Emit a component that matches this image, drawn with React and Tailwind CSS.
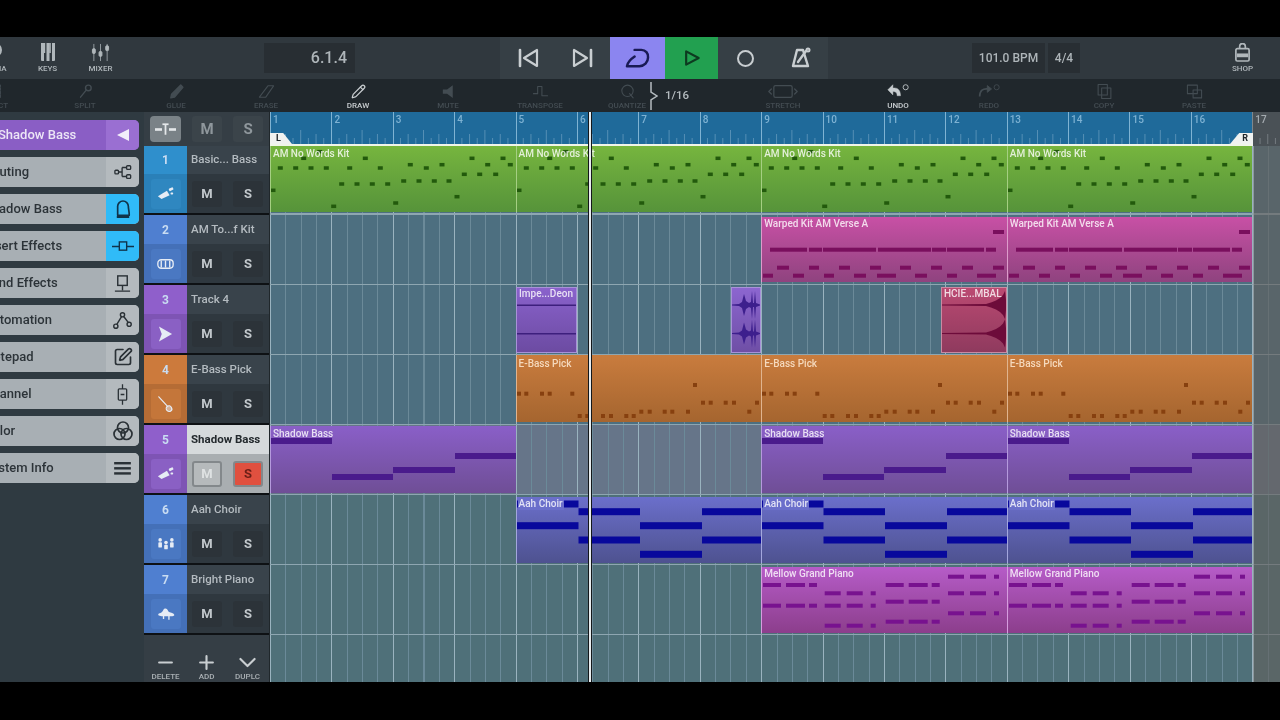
import { Pencil, SquarePen } from "lucide-react"

const BAR = 61.4

// grid lines shared by every arrangement row
const GRID =
  "bg-[repeating-linear-gradient(90deg,#9ab3bf_0,#9ab3bf_1px,transparent_1px,transparent_61.4px),repeating-linear-gradient(90deg,#6b8a99_0,#6b8a99_1px,transparent_1px,transparent_15.35px)]"

const GREEN_NOTES = [
  [32.7, 12.3], [48.7, 5.7], [94.3, 12.3], [201, 12.3], [232, 12.3], [9.3, 22], [24.7, 22], [40, 22], [55.3, 22], [78.7, 22],
  [109.3, 22], [139.3, 18.7], [155.3, 22], [171, 18.7], [216.7, 18.7], [239.3, 18.7], [70.7, 38], [86, 38], [101.3, 38],
  [116.7, 38], [132.7, 35], [148, 35], [163.3, 35], [178, 35], [193.3, 28.3], [208.7, 28.3], [224.7, 28.3], [2, 44.3],
  [62.7, 60.3], [124.7, 57], [186, 50.7],
]

const PINK_NOTES = [
  [15, 231, 242], [32.7, 8, 45], [32.7, 47, 60], [32.7, 61, 114], [32.7, 116, 169], [32.7, 170, 184], [32.7, 185, 222], [32.7, 224, 234],
  [50.7, 15, 27], [50.7, 47, 57], [50.7, 77, 88], [50.7, 108, 119], [50.7, 138, 149], [50.7, 169, 180], [50.7, 200, 211], [50.7, 231, 242],
  [58.7, 1, 11], [58.7, 31, 42], [58.7, 62, 72], [58.7, 92, 104], [58.7, 115, 134], [58.7, 153, 165], [58.7, 185, 195], [58.7, 215, 234],
]

const ORANGE_NOTES = [
  [178, 30], [2, 38.7], [9.3, 38.7], [25, 38.7], [32.7, 38.7], [55.3, 38.7], [186, 47.7], [193.7, 47.7], [208.7, 47.7], [217, 47.7],
  [240, 47.7], [124.3, 56.7], [132.7, 56.7], [147.7, 56.7], [155.3, 56.7], [171, 56.7], [232.3, 56.7], [62.7, 61], [70.3, 61],
  [86, 61], [94, 61], [109.3, 61], [116.7, 61],
]

const BASS_NOTES = [[15, 0, 61], [51, 61, 122], [44, 122, 184], [30, 184, 245]]

const CHOIR_NOTES = [
  [7, 0, 61.5], [14.7, 61.5, 123], [14.7, 185, 245], [28.7, 0, 61.5], [28.7, 123, 185], [43, 61.5, 123], [43, 185, 245], [57.3, 123, 185],
]

const chord = (y, x) => [[y, x, x + 18], [y, x + 23, x + 42], [y, x + 46, x + 54]]
const chordShort = (y, x) => [[y, x, x + 16], [y, x + 22, x + 38], [y, x + 46, x + 51]]
const PIANO_NOTES = [
  ...chord(18, 1), ...chord(38.7, 1), ...chordShort(26.3, 62.7), ...chordShort(38.7, 62.7), ...chordShort(58.7, 62.7),
  ...chord(18, 123.7), ...chord(34.7, 123.7), ...chord(54.7, 123.7), ...chordShort(9.7, 186), ...chordShort(26.3, 186), ...chordShort(46.3, 186),
]

function Dots({ notes, w, h, color }) {
  return (
    <svg className="absolute inset-0 w-full h-full">
      {notes.map(([x, y], i) => (
        <rect key={i} x={x - w / 2} y={y - h / 2} width={w} height={h} fill={color} />
      ))}
    </svg>
  )
}

function Bars({ notes, h, color }) {
  return (
    <svg className="absolute inset-0 w-full h-full">
      {notes.map(([y, a, b], i) => (
        <rect key={i} x={a} y={y - h / 2} width={b - a} height={h} fill={color} />
      ))}
    </svg>
  )
}

function Clip({ bar, bars, left, width, title, className, textClass = "text-white/80", titleClass = "", children }) {
  const x = left ?? (bar - 1) * BAR
  const w = width ?? bars * BAR
  return (
    <div className={`absolute overflow-hidden ${className}`} style={{ left: x, width: w }}>
      {children}
      {title && (
        <span className={`absolute left-[1px] top-[2px] px-[1px] text-[10px] leading-[12px] font-medium whitespace-nowrap ${textClass} ${titleClass}`}>
          {title}
        </span>
      )}
    </div>
  )
}

function Row({ className = "", children }) {
  return <div className={`relative shrink-0 ${GRID} ${className}`}>{children}</div>
}

// mirror an outline around the wave's centre line
const mirrored = (outline, cy) => {
  const up = outline.map(([x, d]) => `${x} ${cy - d}`)
  const down = [...outline].reverse().map(([x, d]) => `${x} ${cy + d}`)
  return `M${[...up, ...down].join(" L")} Z`
}

// drum hit in the short purple audio clip
const BURST = [[0, 0.5], [7, 1], [10, 3], [12, 11], [14, 4], [17, 2], [19, 3], [20, 14], [21, 2], [22, 2], [23, 14], [24, 2], [28, 0.5]]

// reversed cymbal, flat until it swells at the clip end
const SWELL = [[0, 0.6], [44, 1], [49, 2.5], [54, 4.5], [58, 7], [61, 10], [63, 14], [64, 5]]

function Arrangement() {
  const green = "top-0 h-[66px] bg-gradient-to-b from-[#76b53e] to-[#56933a] border-l border-[#a5cf82]"
  const pink = "top-[2px] h-[65px] bg-gradient-to-b from-[#c850a5] to-[#8f437f] border-l border-[#dd9ccb]"
  const orange = "top-0 h-[67px] bg-gradient-to-b from-[#c97c3e] to-[#a5652f] border-l border-[#e0b48f]"
  const purple = "top-[1px] h-[67px] bg-gradient-to-b from-[#8a5fc8] to-[#6f4e96] border-l border-[#b59add]"
  const blue = "top-[2px] h-[66px] bg-gradient-to-b from-[#6b6fcb] to-[#4e5290] border-l border-[#a3a6dd]"
  const magenta = "top-[2px] h-[66px] bg-gradient-to-b from-[#b65cc8] to-[#8c3e8c] border-l border-[#d69ddf]"
  const audioBorder = "border border-[#a892d8]"

  const greenBody = <Dots notes={GREEN_NOTES} w={5} h={3.5} color="#225a0c" />
  const pinkBody = <Bars notes={PINK_NOTES} h={4} color="#7a0f5e" />
  const orangeBody = <Dots notes={ORANGE_NOTES} w={4} h={4} color="#87400f" />
  const bassBody = <Bars notes={BASS_NOTES} h={6} color="#4a1b8c" />
  const choirBody = <Bars notes={CHOIR_NOTES} h={7} color="#08089c" />
  const pianoBody = <Bars notes={PIANO_NOTES} h={4} color="#78128f" />

  return (
    <div className="relative flex-1 overflow-hidden">
      <Ruler />

      <Row className="h-[69px] bg-[#4d6f80] border-b-[2px] border-[#8ea6b1]">
        <Clip bar={1} bars={4} title="AM No Words Kit" className={green}>{greenBody}</Clip>
        <Clip bar={5} bars={4} title="AM No Words Kit" className={green}>{greenBody}</Clip>
        <Clip bar={9} bars={4} title="AM No Words Kit" className={green}>{greenBody}</Clip>
        <Clip bar={13} bars={4} title="AM No Words Kit" className={green}>{greenBody}</Clip>
      </Row>

      <Row className="h-[70px] bg-[#4d6f80] border-b border-[#8ea6b1]">
        <Clip bar={9} bars={4} title="Warped Kit AM Verse A" titleClass="-mt-[1px]" className={pink}>{pinkBody}</Clip>
        <Clip bar={13} bars={4} title="Warped Kit AM Verse A" titleClass="-mt-[1px]" className={pink}>{pinkBody}</Clip>
      </Row>

      <Row className="h-[70px] bg-[#4d6f80] border-b border-[#8ea6b1]">
        <Clip left={246} width={61} title="Impe...Deon" titleClass="-mt-[2px]" className={`top-[2px] h-[66px] bg-gradient-to-b from-[#8a62cc] to-[#6c4ba2] ${audioBorder}`}>
          <svg className="absolute inset-0 w-full h-full">
            <rect x="0" y="16.5" width="60" height="1.5" fill="#3d1f7d" />
            <rect x="0" y="45" width="60" height="1.5" fill="#3d1f7d" />
          </svg>
        </Clip>
        <Clip left={461} width={30} className={`top-[2px] h-[66px] bg-gradient-to-b from-[#8c66d0] to-[#6f4fa6] ${audioBorder}`}>
          <svg className="absolute inset-0 w-full h-full">
            <path d={mirrored(BURST, 17)} fill="#3d1f8d" />
            <path d={mirrored(BURST, 45.5)} fill="#3d1f8d" />
          </svg>
        </Clip>
        <Clip left={671} width={66} title="HCIE...MBAL" titleClass="-mt-[2px]" className="top-[2px] h-[66px] bg-gradient-to-b from-[#bb4a72] to-[#8f3a5e] border border-[#c98ba2]">
          <svg className="absolute inset-0 w-full h-full">
            <path d={mirrored(SWELL, 17)} fill="#6d0b3a" />
            <path d={mirrored(SWELL, 45.5)} fill="#6d0b3a" />
          </svg>
        </Clip>
      </Row>

      <Row className="h-[70px] bg-[#4d6f80] border-b border-[#8ea6b1]">
        <Clip bar={5} bars={4} title="E-Bass Pick" textClass="text-[#f5d9bd]" titleClass="mt-[1px]" className={orange}>{orangeBody}</Clip>
        <Clip bar={9} bars={4} title="E-Bass Pick" textClass="text-[#f5d9bd]" titleClass="mt-[1px]" className={orange}>{orangeBody}</Clip>
        <Clip bar={13} bars={4} title="E-Bass Pick" textClass="text-[#f5d9bd]" titleClass="mt-[1px]" className={orange}>{orangeBody}</Clip>
      </Row>

      <Row className="h-[70px] bg-[#667589] border-b border-[#8ea6b1]">
        <Clip bar={1} bars={4} title="Shadow Bass" className={purple}>{bassBody}</Clip>
        <Clip bar={9} bars={4} title="Shadow Bass" className={purple}>{bassBody}</Clip>
        <Clip bar={13} bars={4} title="Shadow Bass" className={purple}>{bassBody}</Clip>
      </Row>

      <Row className="h-[70px] bg-[#4f7079] border-b border-[#8ea6b1]">
        <Clip bar={5} bars={4} title="Aah Choir" titleClass="-mt-[1px] bg-[#6b6fcb]" className={blue}>{choirBody}</Clip>
        <Clip bar={9} bars={4} title="Aah Choir" titleClass="-mt-[1px] bg-[#6b6fcb]" className={blue}>{choirBody}</Clip>
        <Clip bar={13} bars={4} title="Aah Choir" titleClass="-mt-[1px] bg-[#6b6fcb]" className={blue}>{choirBody}</Clip>
      </Row>

      <Row className="h-[70px] bg-[#4f7079] border-b border-[#8ea6b1]">
        <Clip bar={9} bars={4} title="Mellow Grand Piano" titleClass="-mt-[1px]" className={magenta}>{pianoBody}</Clip>
        <Clip bar={13} bars={4} title="Mellow Grand Piano" titleClass="-mt-[1px]" className={magenta}>{pianoBody}</Clip>
      </Row>

      <Row className="h-[47px] bg-[#4f7079]" />

      {/* area past the song end */}
      <div className="absolute top-[34px] bottom-0 right-0 w-[27px] bg-[#625f5c]/60 border-l border-[#8d979d]" />

      {/* playhead */}
      <div className="absolute top-0 bottom-0 left-[318px] w-[4px] bg-[#14181b] flex justify-center">
        <div className="w-[2px] h-full bg-[#e8ecee]" />
      </div>
    </div>
  )
}

function Ruler() {
  const ticks = []
  for (let b = 0; b < 17; b++) {
    for (let j = 2; j < 16; j += 2) {
      const h = j % 8 === 0 ? 14 : j % 4 === 0 ? 10 : 6
      const x = b * BAR + (j * BAR) / 16
      ticks.push(<line key={`${b}-${j}`} x1={x} x2={x} y1={32 - h} y2={32} stroke={b === 16 ? "#747b80" : "#558fb5"} strokeWidth="1" />)
    }
  }
  return (
    <div className="relative h-[34px] bg-[#1f6a9a]">
      <div className="absolute inset-0 grid grid-cols-[repeat(17,61.4px)]">
        {Array.from({ length: 17 }, (_, i) => (
          <div
            key={i}
            className={`border-l pl-[2px] pt-[1px] text-[10px] leading-[14px] font-medium ${i === 16 ? "bg-[#4a5156] border-[#7f878c] text-[#a4abb0]" : "border-[#7fb3d3] text-[#7eb2d3]"}`}
          >
            {i + 1}
          </div>
        ))}
      </div>
      <svg className="absolute inset-0 w-full h-[32px]">{ticks}</svg>
      <div className="absolute left-0 right-[27px] bottom-0 h-[2px] bg-[#f0f5e8]" />
      <div className="absolute left-0 bottom-[2px] w-[22px] h-[11px] bg-[#f0f2f0] [clip-path:polygon(0_0,60%_0,100%_100%,0_100%)] text-[9px] leading-[11px] font-bold text-[#20262a] pl-[6px]">L</div>
      <div className="absolute right-[27px] bottom-[2px] w-[23px] h-[11px] bg-[#f0f2f0] [clip-path:polygon(40%_0,100%_0,100%_100%,0_100%)] text-[9px] leading-[11px] font-bold text-[#20262a] text-right pr-[5px]">R</div>
    </div>
  )
}

/* ---------- icons ---------- */

const Svg = ({ children, className = "w-[24px] h-[24px]", view = "0 0 24 24" }) => (
  <svg viewBox={view} className={className} fill="none" stroke="currentColor" strokeWidth="2" strokeLinecap="round" strokeLinejoin="round">
    {children}
  </svg>
)

const KeysIcon = () => (
  <svg viewBox="0 0 16 20" className="w-[16px] h-[20px]" fill="currentColor">
    <path d="M1 1h3v18H2a1 1 0 0 1-1-1zM6.5 1h3v18h-3zM12 1h3v17a1 1 0 0 1-1 1h-2z" />
    <rect x="3.6" y="1" width="1.6" height="10" />
    <rect x="9.2" y="1" width="1.6" height="10" />
  </svg>
)

const MixerIcon = () => (
  <svg viewBox="0 0 20 20" className="w-[19px] h-[19px]" fill="currentColor" stroke="currentColor">
    <path d="M3 1v18M10 1v18M17 1v18" strokeWidth="0.8" />
    <rect x="1.5" y="6" width="3" height="5" rx="1" />
    <rect x="8.5" y="9" width="3" height="5" rx="1" />
    <rect x="15.5" y="3" width="3" height="5" rx="1" />
  </svg>
)

const ShopIcon = () => (
  <svg viewBox="0 0 18 20" className="w-[17px] h-[19px]" fill="none" stroke="currentColor" strokeWidth="1.8">
    <path d="M6 6V3.5a3 3 0 0 1 6 0V6" />
    <rect x="2" y="6" width="14" height="13" rx="1.5" />
    <rect x="3" y="11" width="12" height="4" fill="currentColor" stroke="none" />
  </svg>
)

const TrackIcon = {
  bass: (
    <svg viewBox="0 0 20 14" className="w-[18px] h-[13px]" fill="currentColor">
      <path d="M1 10l10-6 3 5-9 4z" />
      <rect x="13" y="1" width="5" height="3" rx="1" transform="rotate(-25 15 2)" />
      <rect x="15" y="6" width="3" height="2" rx="1" />
    </svg>
  ),
  drum: (
    <svg viewBox="0 0 20 14" className="w-[17px] h-[12px]" fill="none" stroke="currentColor" strokeWidth="1.6">
      <rect x="1" y="2" width="18" height="10" rx="4" />
      <path d="M5 3v8M10 3v8M15 3v8" />
    </svg>
  ),
  play: (
    <svg viewBox="0 0 16 16" className="w-[15px] h-[16px]" fill="currentColor">
      <path d="M1 0l14 8-14 8 3-8z" />
    </svg>
  ),
  guitar: (
    <svg viewBox="0 0 20 20" className="w-[18px] h-[18px]" fill="none" stroke="currentColor" strokeWidth="1.3" strokeLinecap="round">
      <path d="M2 2l10 11" />
      <path d="M11 13c2-2 4-1 5 1s1 3-1 4-3 0-4-1-1-3 0-4z" fill="currentColor" fillOpacity="0.5" />
    </svg>
  ),
  choir: (
    <svg viewBox="0 0 20 14" className="w-[18px] h-[13px]" fill="currentColor">
      <circle cx="3.5" cy="3" r="2" /><rect x="1.5" y="5.5" width="4" height="6" rx="1" />
      <circle cx="10" cy="6" r="2" /><rect x="8" y="8.5" width="4" height="5" rx="1" />
      <circle cx="16.5" cy="3" r="2" /><rect x="14.5" y="5.5" width="4" height="6" rx="1" />
    </svg>
  ),
  piano: (
    <svg viewBox="0 0 20 14" className="w-[18px] h-[13px]" fill="currentColor">
      <path d="M2 7c3-1 4-2 5-4s3-2 4-1 1 2 2 3 5 1 6 3-2 2-5 2v4h-1.5v-4H8v3H6.5v-3C3 10 0 9 2 7z" />
    </svg>
  ),
}

const Side = {
  routing: (
    <svg viewBox="0 0 20 20" className="w-[18px] h-[18px]" fill="none" stroke="currentColor" strokeWidth="1.5">
      <rect x="1" y="8" width="4" height="4" rx="1" /><rect x="14" y="3" width="4.5" height="4" rx="1" /><rect x="14" y="13" width="4.5" height="4" rx="1" />
      <path d="M5 10h4M9 5h5M9 15h5M9 5v10" />
    </svg>
  ),
  piano: (
    <svg viewBox="0 0 18 22" className="w-[16px] h-[20px]" fill="none" stroke="#10334a" strokeWidth="1.9" strokeLinejoin="round">
      <path d="M3 18V8a6 6 0 0 1 12 0c0 3 1 5 1 10z" />
      <path d="M2 20h14" strokeWidth="2.5" />
    </svg>
  ),
  insert: (
    <svg viewBox="0 0 24 16" className="w-[22px] h-[15px]" fill="none" stroke="#10334a" strokeWidth="1.5">
      <rect x="8" y="3" width="8" height="9" /><path d="M0 8h8M16 8h8" />
    </svg>
  ),
  send: (
    <svg viewBox="0 0 20 20" className="w-[19px] h-[19px]" fill="none" stroke="currentColor" strokeWidth="1.5">
      <rect x="5" y="2" width="10" height="10" /><path d="M10 12v5M2 18h16" />
    </svg>
  ),
  automation: (
    <svg viewBox="0 0 20 20" className="w-[19px] h-[19px]" fill="none" stroke="currentColor" strokeWidth="1.5">
      <circle cx="3" cy="16" r="2.2" /><circle cx="10" cy="4" r="2.2" /><circle cx="17" cy="14" r="2.2" /><path d="M4 14l5-8M11.5 6l4.5 6" />
    </svg>
  ),
  channel: (
    <svg viewBox="0 0 14 22" className="w-[13px] h-[21px]" fill="none" stroke="currentColor" strokeWidth="1.4">
      <path d="M7 0v5M7 17v5" /><rect x="2.5" y="5" width="9" height="12" rx="1" /><path d="M5 11h4" />
    </svg>
  ),
  color: (
    <svg viewBox="0 0 20 20" className="w-[20px] h-[20px]" fill="none" stroke="currentColor" strokeWidth="1.7">
      <circle cx="10" cy="6.5" r="5.5" /><circle cx="6.5" cy="13" r="5.5" /><circle cx="13.5" cy="13" r="5.5" />
    </svg>
  ),
  menu: (
    <svg viewBox="0 0 18 14" className="w-[17px] h-[13px]" fill="currentColor">
      <rect y="0" width="18" height="2.6" /><rect y="5.5" width="18" height="2.6" /><rect y="11" width="18" height="2.6" />
    </svg>
  ),
}

const INSPECTOR = [
  { label: "Routing", icon: Side.routing },
  { label: "Shadow Bass", icon: Side.piano, on: true },
  { label: "Insert Effects", icon: Side.insert, on: true },
  { label: "Send Effects", icon: Side.send },
  { label: "Automation", icon: Side.automation },
  { label: "Notepad", icon: <SquarePen className="w-[20px] h-[20px]" strokeWidth={2} /> },
  { label: "Channel", icon: Side.channel },
  { label: "Color", icon: Side.color },
  { label: "System Info", icon: Side.menu },
]

function Inspector() {
  return (
    <div className="w-[144px] shrink-0 bg-[#2f3a41] overflow-hidden">
      <div className="-ml-[16px] w-[155px] pt-[8px] flex flex-col gap-[7px]">
        <div className="h-[30px] rounded-[5px] bg-[#8a5ec5] flex items-center overflow-hidden">
          <span className="flex-1 pl-[14px] pb-[1px] text-[13px] font-medium text-[#ece6f6]">Shadow Bass</span>
          <span className="w-[33px] h-full bg-[#9a6fd2] flex items-center justify-center">
            <svg viewBox="0 0 12 12" className="w-[12px] h-[12px]" fill="#f2eefa"><path d="M12 0v12L0 6z" /></svg>
          </span>
        </div>
        {INSPECTOR.map(item => (
          <div key={item.label} className="h-[30px] rounded-[5px] bg-[#a8afb4] flex items-center overflow-hidden">
            <span className="flex-1 pb-[1px] text-[13px] font-medium text-[#2c3338] whitespace-nowrap">{item.label}</span>
            <span className={`w-[33px] h-full flex items-center justify-center text-[#2a3136] ${item.on ? "bg-[#30bbf8]" : "bg-[#b4babe]"}`}>
              {item.icon}
            </span>
          </div>
        ))}
      </div>
    </div>
  )
}

const TRACKS = [
  { n: 1, name: "Basic... Bass", top: "bg-[#2f8fcc]", low: "bg-[#2a80b8]", pad: "bg-[#2f87c0]", icon: TrackIcon.bass, h: "h-[69px]", numH: "h-[28px]" },
  { n: 2, name: "AM To...f Kit", top: "bg-[#4f7fd0]", low: "bg-[#4470b8]", pad: "bg-[#4a78c2]", icon: TrackIcon.drum },
  { n: 3, name: "Track 4", top: "bg-[#8f5fcb]", low: "bg-[#7e54b4]", pad: "bg-[#8a60c4]", icon: TrackIcon.play },
  { n: 4, name: "E-Bass Pick", top: "bg-[#cc7a3c]", low: "bg-[#b56c35]", pad: "bg-[#c4763a]", icon: TrackIcon.guitar },
  { n: 5, name: "Shadow Bass", top: "bg-[#8f5fcb]", low: "bg-[#7e54b4]", pad: "bg-[#8a60c4]", icon: TrackIcon.bass, active: true },
  { n: 6, name: "Aah Choir", top: "bg-[#4f7fd0]", low: "bg-[#4470b8]", pad: "bg-[#4a78c2]", icon: TrackIcon.choir },
  { n: 7, name: "Bright Piano", top: "bg-[#4f7fd0]", low: "bg-[#4470b8]", pad: "bg-[#4a78c2]", icon: TrackIcon.piano },
]

function TrackRow({ n, name, top, low, pad, icon, active, h = "h-[70px]", numH = "h-[29px]" }) {
  return (
    <div className={`${h} shrink-0 flex border-b-2 border-[#0e1114]`}>
      <div className="w-[43px] shrink-0 flex flex-col">
        <div className={`${numH} shrink-0 flex items-center justify-center text-[12px] font-bold text-[#c9dcf2] ${top}`}>{n}</div>
        <div className={`flex-1 flex items-center justify-center ${low}`}>
          <div className={`w-[30px] h-[30px] rounded-[3px] flex items-center justify-center text-[#e6ecf5] ${pad}`}>{icon}</div>
        </div>
      </div>
      <div className="flex-1 flex flex-col">
        <div className={`${numH} shrink-0 flex items-center pl-[4px] text-[11.5px] whitespace-nowrap ${active ? "bg-[#d6dadc] text-[#23292d] font-bold" : "bg-[#39434b] text-[#b4bbc0] font-medium"}`}>
          {name}
        </div>
        <div className={`flex-1 flex items-center gap-[11px] pl-[5px] pt-[1px] ${active ? "bg-[#a9aeb1]" : "bg-[#2f383f]"}`}>
          <div className={`w-[30px] h-[26px] rounded-[3px] flex items-center justify-center text-[13px] font-bold ${active ? "bg-[#b6babc] border-2 border-[#83888b] text-[#dfe2e3]" : "bg-[#2c3339] text-[#c2c8cc]"}`}>M</div>
          <div className={`w-[30px] h-[26px] rounded-[3px] flex items-center justify-center text-[13px] font-bold ${active ? "bg-[#e0503f] border-2 border-[#83888b] text-[#6b1f17]" : "bg-[#2c3339] text-[#c2c8cc]"}`}>S</div>
        </div>
      </div>
    </div>
  )
}

const FootBtn = ({ label, children }) => (
  <div className="w-[41px] flex flex-col items-center">
    <Svg className="w-[17px] h-[17px]">{children}</Svg>
    <span className="text-[8px] leading-[11px] font-medium text-[#aab0b4]">{label}</span>
  </div>
)

function TrackList() {
  return (
    <div className="w-[126px] shrink-0 border-r border-[#20272b] bg-[#353e45] flex flex-col">
      <div className="h-[34px] shrink-0 flex items-center gap-[11px] pl-[6px]">
        <div className="w-[31px] h-[26px] rounded-[4px] bg-[#7a8287] flex items-center justify-center text-[#e4e7e9]">
          <svg viewBox="0 0 24 14" className="w-[21px] h-[13px]" fill="currentColor">
            <rect x="0" y="5.5" width="8" height="3" /><rect x="16" y="5.5" width="8" height="3" /><rect x="11" y="1" width="2" height="12" /><rect x="8.5" y="0" width="7" height="2" />
          </svg>
        </div>
        <div className="w-[30px] h-[26px] rounded-[3px] bg-[#3b444a] flex items-center justify-center text-[15px] font-bold text-[#8f979c]">M</div>
        <div className="w-[30px] h-[26px] rounded-[3px] bg-[#3b444a] flex items-center justify-center text-[15px] font-bold text-[#8f979c]">S</div>
      </div>
      {TRACKS.map(t => <TrackRow key={t.n} {...t} />)}
      <div className="flex-1 flex items-end pl-[1px] text-[#c9ced1]">
        <FootBtn label="DELETE"><path d="M3 12h18" strokeWidth="3" /></FootBtn>
        <FootBtn label="ADD"><path d="M3 12h18M12 3v18" strokeWidth="3" /></FootBtn>
        <FootBtn label="DUPLC"><path d="M2 7l10 10L22 7" strokeWidth="3" /></FootBtn>
      </div>
    </div>
  )
}

/* ---------- top bars ---------- */

const TopItem = ({ label, children }) => (
  <div className="w-[53px] flex flex-col items-center">
    <div className="h-[22px] -mt-[1px] flex items-center">{children}</div>
    <span className="text-[8px] leading-[10px] font-medium pt-[1px]">{label}</span>
  </div>
)

function TopBar() {
  return (
    <div className="h-[42px] shrink-0 bg-[#30383e] flex items-center text-[#b0b7bb]">
      <div className="-ml-[32px] w-[53px] flex flex-col items-center">
        <div className="w-[14px] h-[14px] rounded-full border-2 border-current mb-[6px]" />
        <span className="text-[8px] leading-[10px] font-medium pt-[1px]">MEDIA</span>
      </div>
      <TopItem label="KEYS"><KeysIcon /></TopItem>
      <TopItem label="MIXER"><MixerIcon /></TopItem>
      <div className="ml-[137px] w-[91px] h-[30px] bg-[#282e33] flex items-center justify-end pr-[8px] text-[16px] font-medium text-[#aeb5b9]">6.1.4</div>
      <div className="ml-[145px] h-full w-[110px] bg-[#363f45] flex items-center text-[#c9ced1]">
        <div className="w-[55px] flex justify-center">
          <Svg><path d="M4 4v16" strokeWidth="2.6" /><path d="M21 4v16L8 12z" strokeWidth="2.2" /></Svg>
        </div>
        <div className="w-[55px] flex justify-center">
          <Svg><path d="M20 4v16" strokeWidth="2.6" /><path d="M3 4v16l13-8z" strokeWidth="2.2" /></Svg>
        </div>
      </div>
      <div className="h-full w-[55px] bg-[#8b85f0] flex items-center justify-center text-[#191a55]">
        <svg viewBox="0 0 28 24" className="w-[27px] h-[23px]" fill="none" stroke="currentColor" strokeWidth="2.6" strokeLinecap="round" strokeLinejoin="round">
          <path d="M11 3h7a7 7 0 0 1 7 8c0 5-4 9-9 9H3c1-5 5-8 8-10" />
        </svg>
      </div>
      <div className="h-full w-[53px] bg-[#22a050] flex items-center justify-center text-[#0d3a20]">
        <Svg className="w-[20px] h-[22px]"><path d="M5 4v16l15-8z" strokeWidth="2.6" /></Svg>
      </div>
      <div className="h-full w-[110px] bg-[#363f45] flex items-center text-[#c9ced1]">
        <div className="w-[55px] flex justify-center">
          <div className="w-[17px] h-[17px] rounded-full border-[2.5px] border-current" />
        </div>
        <div className="w-[55px] flex justify-center">
          <Svg><path d="M8 4h6l5 16H4z" strokeWidth="2.4" /><path d="M9 16l8-11" strokeWidth="2.4" /><circle cx="19" cy="4" r="1.5" /></Svg>
        </div>
      </div>
      <div className="ml-[144px] w-[73px] h-[30px] bg-[#282e33] flex items-center justify-center text-[12px] font-medium text-[#aeb5b9]">101.0 BPM</div>
      <div className="ml-[3px] w-[32px] h-[30px] bg-[#282e33] flex items-center justify-center text-[12px] font-medium text-[#aeb5b9]">4/4</div>
      <div className="ml-auto mr-[11px]">
        <TopItem label="SHOP"><ShopIcon /></TopItem>
      </div>
    </div>
  )
}

const ToolItem = ({ label, active, className = "", children }) => (
  <div className={`w-[80px] shrink-0 flex flex-col items-center ${active ? "text-[#c8cdd0]" : "text-[#434c52]"} ${className}`}>
    <div className="h-[19px] flex items-center">{children}</div>
    <span className="text-[8px] leading-[9px] font-medium">{label}</span>
  </div>
)

function ToolBar() {
  const tiny = "w-[17px] h-[17px]"
  return (
    <div className="h-[33px] shrink-0 bg-[#20272c] flex items-center">
      <ToolItem label="SELECT" className="-ml-[46px]">
        <Svg className={tiny}><rect x="4" y="3" width="16" height="18" strokeDasharray="3 2" /></Svg>
      </ToolItem>
      <ToolItem label="SPLIT" className="ml-[11px]">
        <Svg className={tiny}><circle cx="16" cy="7" r="4" /><path d="M13 10L5 20" /></Svg>
      </ToolItem>
      <ToolItem label="GLUE" className="ml-[11px]">
        <Svg className={tiny}><path d="M18 3l3 3-12 14-5 1 1-5z" fill="currentColor" /></Svg>
      </ToolItem>
      <ToolItem label="ERASE" className="ml-[10px]">
        <Svg className={tiny}><path d="M14 4h8L11 20H2z" strokeWidth="1.5" /></Svg>
      </ToolItem>
      <ToolItem label="DRAW" active className="ml-[12px]">
        <Pencil className="w-[15px] h-[15px]" strokeWidth={2} />
      </ToolItem>
      <ToolItem label="MUTE" className="ml-[10px]">
        <svg viewBox="0 0 24 24" className={tiny} fill="currentColor"><path d="M4 9h6l8-6v18l-8-6H4z" /></svg>
      </ToolItem>
      <ToolItem label="TRANSPOSE" className="ml-[12px]">
        <Svg className={tiny}><path d="M2 15h6V5h6v13h8" strokeWidth="1.5" /></Svg>
      </ToolItem>
      <ToolItem label="QUANTIZE" className="ml-[7px]">
        <Svg className={tiny}><circle cx="12" cy="11" r="8" strokeWidth="1.5" /><path d="M15 15l5 6" strokeWidth="1.5" /></Svg>
      </ToolItem>
      <div className="-ml-[17px] w-[93px] shrink-0 flex items-center gap-[7px] text-[#b5bcc0]">
        <svg viewBox="0 0 8 28" className="w-[8px] h-[28px]" fill="none" stroke="currentColor" strokeWidth="1.5">
          <path d="M1 0v10l6 4-6 4v10" />
        </svg>
        <span className="text-[11.5px] font-medium">1/16</span>
      </div>
      <ToolItem label="STRETCH">
        <Svg className="w-[30px] h-[17px]" view="0 0 36 20"><rect x="7" y="3" width="22" height="14" rx="2" strokeWidth="1.5" /><path d="M4 7l-3 3 3 3M32 7l3 3-3 3" strokeWidth="1.5" /></Svg>
      </ToolItem>
      <ToolItem label="UNDO" active className="ml-[35px]">
        <svg viewBox="0 0 30 20" className="w-[26px] h-[17px]" fill="none" stroke="currentColor">
          <path d="M3 8l6-6v4c6-1 9 3 9 9h-4c0-4-2-5-5-5v4z" fill="currentColor" strokeWidth="0.5" />
          <circle cx="24" cy="5" r="3" strokeWidth="1" />
        </svg>
      </ToolItem>
      <ToolItem label="REDO" className="ml-[11px]">
        <svg viewBox="0 0 30 20" className="w-[26px] h-[17px]" fill="none" stroke="currentColor">
          <path d="M4 16c0-7 4-10 10-9" strokeWidth="2" />
          <path d="M13 3l5 4-5 4z" fill="currentColor" />
          <circle cx="24" cy="5" r="3" strokeWidth="1" />
        </svg>
      </ToolItem>
      <ToolItem label="COPY" className="ml-[35px]">
        <Svg className={tiny}><rect x="3" y="2" width="13" height="15" strokeWidth="1.5" /><rect x="8" y="7" width="13" height="15" strokeWidth="1.5" /></Svg>
      </ToolItem>
      <ToolItem label="PASTE" className="ml-[10px]">
        <Svg className={tiny}><rect x="2" y="3" width="14" height="12" strokeWidth="1.5" /><rect x="10" y="10" width="12" height="11" strokeWidth="1.5" /></Svg>
      </ToolItem>
    </div>
  )
}

export default function App() {
  return (
    <div className="w-[1280px] h-[720px] overflow-hidden bg-black pt-[37px] pb-[38px] flex flex-col blur-[0.5px] [font-family:Roboto,sans-serif]">
      <TopBar />
      <ToolBar />
      <div className="flex-1 flex min-h-0">
        <Inspector />
        <TrackList />
        <Arrangement />
      </div>
    </div>
  )
}
